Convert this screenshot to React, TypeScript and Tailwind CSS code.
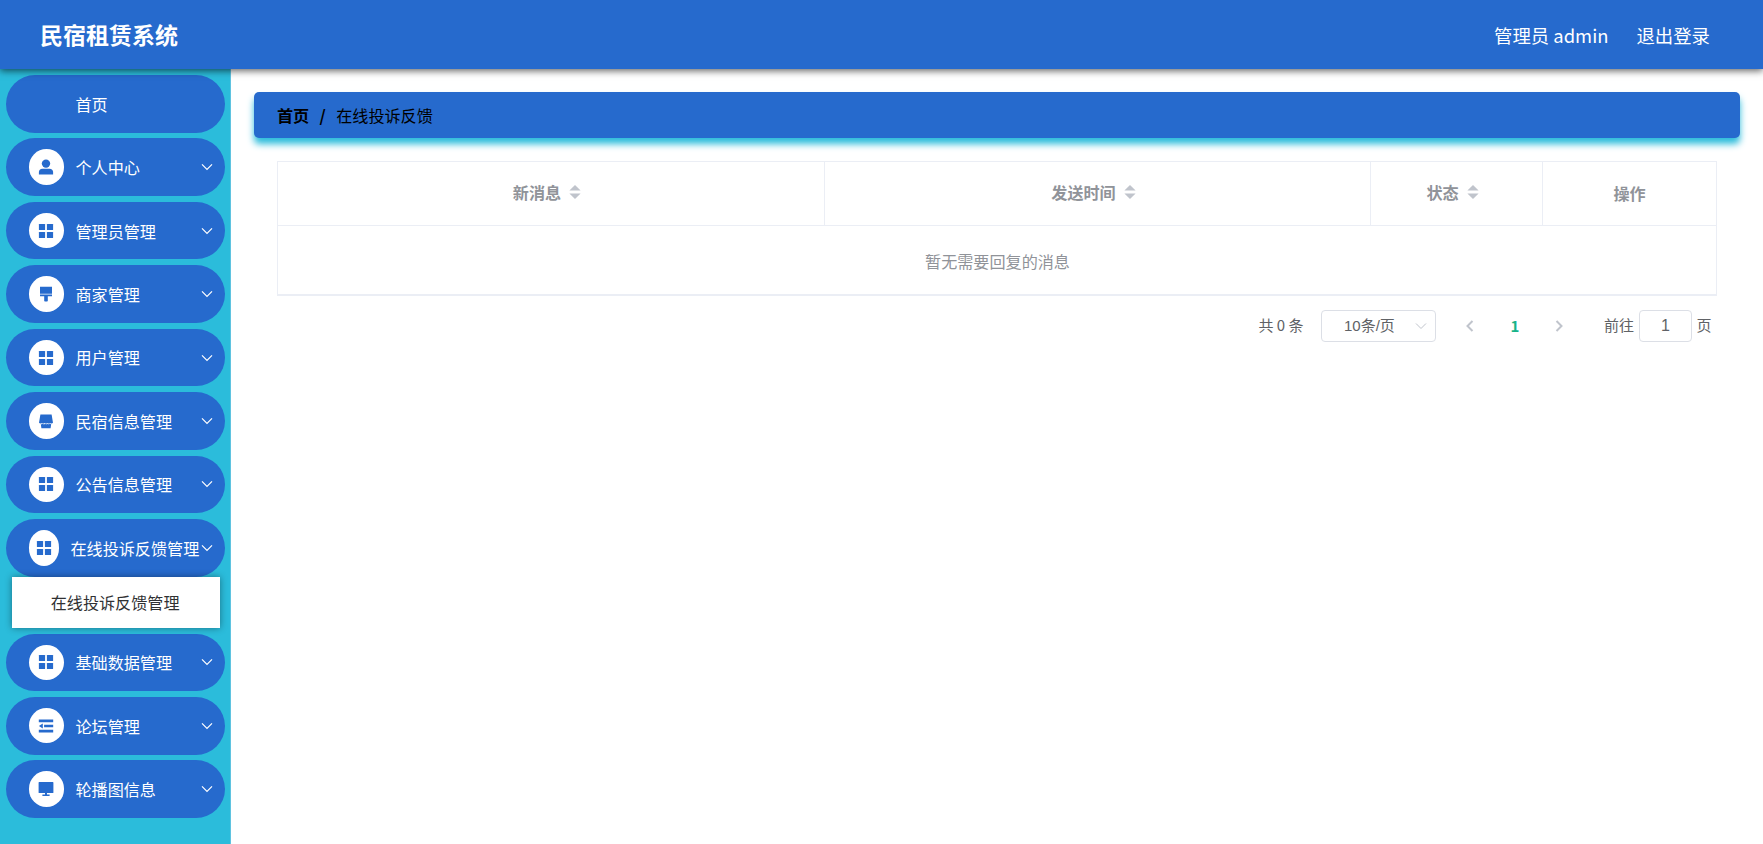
import React, { useState } from 'react';

type IconName = 'user' | 'menu' | 'brush' | 'shop' | 'fold' | 'platform';

interface MenuItem {
  title: string;
  icon?: IconName;
  children?: string[];
}

const menuList: MenuItem[] = [
  { title: '首页' },
  { title: '个人中心', icon: 'user', children: ['修改密码', '个人信息'] },
  { title: '管理员管理', icon: 'menu', children: ['管理员管理'] },
  { title: '商家管理', icon: 'brush', children: ['商家管理'] },
  { title: '用户管理', icon: 'menu', children: ['用户管理'] },
  { title: '民宿信息管理', icon: 'shop', children: ['民宿信息管理'] },
  { title: '公告信息管理', icon: 'menu', children: ['公告信息管理'] },
  { title: '在线投诉反馈管理', icon: 'menu', children: ['在线投诉反馈管理'] },
  { title: '基础数据管理', icon: 'menu', children: ['基础数据管理'] },
  { title: '论坛管理', icon: 'fold', children: ['论坛管理'] },
  { title: '轮播图信息', icon: 'platform', children: ['轮播图信息'] },
];

const columns = [
  { label: '新消息', sortable: true },
  { label: '发送时间', sortable: true },
  { label: '状态', sortable: true },
  { label: '操作', sortable: false },
];

function MenuIcon({ name }: { name: IconName }) {
  return (
    <svg viewBox="0 0 16 16" className="size-4 shrink-0 fill-[#266acd]">
      {name === 'user' && (
        <>
          <circle cx="8" cy="4.6" r="4.2" />
          <path d="M.9 15.4v-2.3c0-2.1 1.4-3.4 3.5-3.4h7.2c2.1 0 3.5 1.3 3.5 3.4v2.3z" />
        </>
      )}
      {name === 'menu' && (
        <>
          <rect x=".9" y=".9" width="6.2" height="6.2" rx=".5" />
          <rect x="8.9" y=".9" width="6.2" height="6.2" rx=".5" />
          <rect x=".9" y="8.9" width="6.2" height="6.2" rx=".5" />
          <rect x="8.9" y="8.9" width="6.2" height="6.2" rx=".5" />
        </>
      )}
      {name === 'brush' && (
        <path d="M2 .8h12v6.9H2zM2 8.6h12v1.7H9.8v4.5a.8.8 0 0 1-.8.8H7a.8.8 0 0 1-.8-.8v-4.5H2z" />
      )}
      {name === 'shop' && (
        <>
          <path d="M2.4 1.4h11.2l1.4 8.3c-.6 1-2 1.1-2.8.2-.8.9-2 .9-2.8 0-.7.9-2 .9-2.7 0-.8.9-2 .9-2.8 0-.8.9-2.3.8-2.9-.2z" />
          <path d="M2.8 11.2c.8.1 1.4-.1 1.8-.5.9.7 1.9.7 2.6 0 .8.7 1.7.7 2.5 0 .8.7 1.7.7 2.3.1.4.3.8.5 1.2.4l-.6 4.1H3.4z" />
        </>
      )}
      {name === 'fold' && (
        <path d="M.8 1.6h14.4v2.6H.8zM6.1 6.7h9.1v2.6H6.1zM.8 11.8h14.4v2.6H.8zM4.8 5.6v4.8L.9 8z" />
      )}
      {name === 'platform' && (
        <path d="M1.2.9h13.6a.6.6 0 0 1 .6.6v9.9a.6.6 0 0 1-.6.6H9v1.6h2.6v1.3H4.4v-1.3H7V12H1.2a.6.6 0 0 1-.6-.6V1.5a.6.6 0 0 1 .6-.6z" />
      )}
    </svg>
  );
}

function Chevron({ className, d }: { className: string; d: string }) {
  return (
    <svg viewBox="0 0 12 12" fill="none" stroke="currentColor" className={className}>
      <path d={d} />
    </svg>
  );
}

function SortCaret() {
  return (
    <svg viewBox="0 0 12 14" className="ml-[8px] h-3.5 w-3 fill-[#c0c4cc]">
      <path d="M6 0l5.6 5.6H.4zM6 14L.4 8.4h11.2z" />
    </svg>
  );
}

export default function App() {
  const [opened, setOpened] = useState<string>('在线投诉反馈管理');
  const [page, setPage] = useState('1');

  const handleToggle = (item: MenuItem) => {
    if (!item.children) return;
    setOpened(opened === item.title ? '' : item.title);
  };

  return (
    <div className="flex h-[844px] flex-col overflow-hidden bg-white font-['Noto_Sans_CJK_SC',sans-serif]">
      <header className="relative z-10 flex h-[69px] shrink-0 items-center justify-between bg-[#266acd] pr-[53px] pl-[40px] text-white shadow-[0_2px_7px_rgba(0,0,0,0.6)]">
        <h1 className="text-[23px] font-bold">民宿租赁系统</h1>
        <div className="flex gap-[28px] pt-[2px] text-[18.4px]">
          <span>管理员 admin</span>
          <button type="button">退出登录</button>
        </div>
      </header>

      <div className="flex min-h-0 flex-1">
        <aside className="w-[231px] shrink-0 border-r border-[#5fc3e0] bg-[#2bbcdb] pt-[6px] pr-[4.75px] pl-[5.75px]">
          {menuList.map((item) => (
            <div key={item.title} className="mb-[5.85px]">
              <button
                type="button"
                onClick={() => handleToggle(item)}
                className="flex h-[57.6px] w-full items-center rounded-full bg-[#266acd] pr-[12.5px] pl-[22.75px] text-white"
              >
                {item.icon ? (
                  <span className="flex h-[35.5px] w-[35.5px] min-w-0 shrink items-center justify-center rounded-[50%] bg-white">
                    <MenuIcon name={item.icon} />
                  </span>
                ) : (
                  <span className="w-[35.5px]" />
                )}
                <span className="mr-[1.5px] ml-[11.5px] shrink-0 text-[16.1px] whitespace-nowrap">{item.title}</span>
                {item.children && (
                  <Chevron className="ml-auto size-3 shrink-0 stroke-[1.2]" d="M1 3.4l5 5 5-5" />
                )}
              </button>
              {opened === item.title &&
                item.children?.map((child) => (
                  <div
                    key={child}
                    className="relative mr-[5px] ml-[6px] flex h-[51px] items-center bg-white pl-[39px] text-[16.1px] text-[#303133] shadow-[0_0_7px_rgba(0,0,0,0.4)]"
                  >
                    {child}
                  </div>
                ))}
            </div>
          ))}
        </aside>

        <main className="flex-1 pt-[23px] pr-[23px] pl-[23px]">
          <nav className="flex h-[46px] items-center rounded-[5px] bg-[#266acd] pl-[23px] text-[16.1px] text-black shadow-[0_6px_7px_#2bbcdb]">
            <b>首页</b>
            <b className="mx-[10.4px]">/</b>
            <span>在线投诉反馈</span>
          </nav>

          <div className="px-[23px] pt-[23px]">
            <div className="border border-b-2 border-[#ebeef5]">
              <div className="grid h-[64px] grid-cols-[547px_546px_172px_1fr] border-b border-[#ebeef5] text-[16.1px] font-bold text-[#909399]">
                {columns.map((col) => (
                  <div
                    key={col.label}
                    className={
                      col.sortable
                        ? 'flex items-center justify-center border-r border-[#ebeef5] pr-[8px] pb-[3px]'
                        : 'flex items-center justify-center'
                    }
                  >
                    {col.label}
                    {col.sortable && <SortCaret />}
                  </div>
                ))}
              </div>
              <div className="flex h-[68px] items-center justify-center pt-[2px] pl-px text-[16.1px] text-[#909399]">
                暂无需要回复的消息
              </div>
            </div>

            <div className="mt-[14px] flex h-8 items-center justify-end pr-[5.5px] text-[15px] text-[#606266]">
              <span className="pb-px">共 0 条</span>
              <div className="ml-[18px] flex h-8 w-[115px] items-center justify-between rounded-[4px] border border-[#dcdfe6] pr-[8px] pl-[21.5px] font-['Liberation_Sans','Noto_Sans_CJK_SC',sans-serif]">
                <span>10条/页</span>
                <Chevron className="size-3 text-[#c0c4cc]" d="M1 3.5l5 5 5-5" />
              </div>
              <Chevron className="ml-[28px] size-3 stroke-2 text-[#c0c4cc]" d="M8.5 1l-5 5 5 5" />
              <span className="w-[77px] text-center font-bold text-[#18b389]">1</span>
              <Chevron className="size-3 stroke-2 text-[#c0c4cc]" d="M3.5 1l5 5-5 5" />
              <span className="ml-[38.5px] pb-px">前往</span>
              <input
                value={page}
                onChange={(e) => setPage(e.target.value)}
                className="mr-[4.5px] ml-[5px] h-8 w-[53px] rounded-[4px] border border-[#dcdfe6] text-center font-['Liberation_Sans',sans-serif] text-base"
              />
              <span className="pb-px">页</span>
            </div>
          </div>
        </main>
      </div>
    </div>
  );
}
